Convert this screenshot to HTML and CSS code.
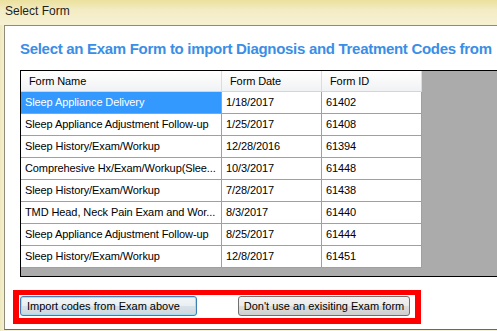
FILE: index.html
```html
<!DOCTYPE html>
<html lang="en">
<head>
    <meta charset="UTF-8">
    <title>Select Form</title>
    <link rel="stylesheet" href="styles.css">
</head>
<body>
    <div class="titlebar">Select Form</div>
    <div class="client">
        <h1 class="heading">Select an Exam Form to import Diagnosis and Treatment Codes from</h1>
        <div class="grid">
            <div class="row header">
                <div class="cell">Form Name</div>
                <div class="cell">Form Date</div>
                <div class="cell">Form ID</div>
            </div>
            <div class="row selected">
                <div class="cell">Sleep Appliance Delivery</div>
                <div class="cell">1/18/2017</div>
                <div class="cell">61402</div>
            </div>
            <div class="row">
                <div class="cell">Sleep Appliance Adjustment Follow-up</div>
                <div class="cell">1/25/2017</div>
                <div class="cell">61408</div>
            </div>
            <div class="row">
                <div class="cell">Sleep History/Exam/Workup</div>
                <div class="cell">12/28/2016</div>
                <div class="cell">61394</div>
            </div>
            <div class="row">
                <div class="cell">Comprehesive Hx/Exam/Workup(Slee...</div>
                <div class="cell">10/3/2017</div>
                <div class="cell">61448</div>
            </div>
            <div class="row">
                <div class="cell">Sleep History/Exam/Workup</div>
                <div class="cell">7/28/2017</div>
                <div class="cell">61438</div>
            </div>
            <div class="row">
                <div class="cell">TMD Head, Neck Pain Exam and Wor...</div>
                <div class="cell">8/3/2017</div>
                <div class="cell">61440</div>
            </div>
            <div class="row">
                <div class="cell">Sleep Appliance Adjustment Follow-up</div>
                <div class="cell">8/25/2017</div>
                <div class="cell">61444</div>
            </div>
            <div class="row">
                <div class="cell">Sleep History/Exam/Workup</div>
                <div class="cell">12/8/2017</div>
                <div class="cell">61451</div>
            </div>
        </div>
        <div class="actions">
            <button class="btn btn-focus">Import codes from Exam above</button>
            <button class="btn">Don't use an exisiting Exam form</button>
        </div>
    </div>
</body>
</html>
```

FILE: styles.css
```css
body {
    margin: 0;
    width: 497px;
    height: 331px;
    overflow: hidden;
    font-family: "Liberation Sans", Arial, sans-serif;
    background: linear-gradient(90deg, #efe8bd 0, #f5f0d0 4px);
}

.titlebar {
    height: 25px;
    padding-left: 5px;
    line-height: 22px;
    font-size: 12px;
    color: #1e1e1e;
    background: linear-gradient(#ebe09c 0, #f3ecc4 10px, #f6f1d2 25px);
}

.client {
    margin-left: 4px;
    height: 303px;
    border-top: 1px solid #8e8b78;
    border-left: 1px solid #8e8b78;
    border-bottom: 1px solid #6e6a57;
    background-color: #fff;
    overflow: hidden;
}

.heading {
    margin: 14px 0 0 15px;
    height: 30px;
    font-size: 15px;
    line-height: 18px;
    font-weight: bold;
    letter-spacing: -0.3px;
    color: #3a8ee6;
    white-space: nowrap;
}

.grid {
    margin-left: 15px;
    width: 490px;
    height: 205px;
    border: 1px solid #000;
    background-color: #ababab;
    font-size: 11px;
    letter-spacing: -0.1px;
    color: #000;
}

.row {
    display: grid;
    grid-template-columns: 201px 100px 100px;
    width: 401px;
    height: 22px;
}

.cell {
    box-sizing: border-box;
    padding-left: 4px;
    line-height: 21px;
    background-color: #fff;
    border-right: 1px solid #a0a0a0;
    border-bottom: 1px solid #a0a0a0;
    white-space: nowrap;
    overflow: hidden;
}

.header {
    height: 21px;
}

.header .cell {
    padding-left: 8px;
    line-height: 20px;
    background: linear-gradient(#ffffff, #f1f2f4);
    border-right: 1px solid #dadce0;
    border-bottom: 1px solid #d5d5d5;
}

.selected .cell:first-child {
    background-color: #3399ff;
    color: #fff;
}

.actions {
    display: flex;
    margin: 13px 0 0 8px;
    width: 396px;
    height: 23px;
    border: 6px solid #ff0000;
    border-top-width: 5px;
}

.btn {
    height: 20px;
    margin-top: 1px;
    padding: 0 0 0 6px;
    font-family: "Liberation Sans", Arial, sans-serif;
    font-size: 11px;
    color: #000;
    text-align: left;
    white-space: nowrap;
    border: 1px solid #707070;
    border-radius: 3px;
    background: linear-gradient(#f2f2f2 0, #ebebeb 50%, #dddddd 51%, #cfcfcf 100%);
}

.btn:first-child {
    width: 177px;
    margin-left: 1px;
}

.btn:last-child {
    width: 172px;
    margin-left: 41px;
    padding: 0;
    text-align: center;
}

.btn-focus {
    border-color: #3c7fb1;
    box-shadow: inset 0 0 0 1px #a8dcf5;
    background: linear-gradient(#f3f6f8 0, #e8eef2 50%, #d9e2e8 51%, #cdd7de 100%);
}
```
